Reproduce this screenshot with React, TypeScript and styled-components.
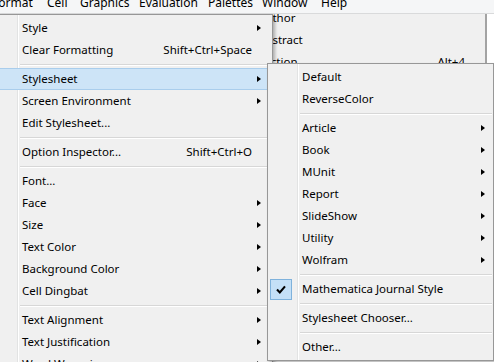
import React from 'react';
import styled, { createGlobalStyle, css } from 'styled-components';

const GlobalStyle = createGlobalStyle`
  html, body {
    margin: 0;
    padding: 0;
    background: #fff;
    overflow: hidden;
  }
  body {
    font-family: 'Noto Sans', 'Open Sans', sans-serif;
    font-size: 11.5px;
    color: #000;
  }
`;

const Screen = styled.div`
  position: relative;
  width: 494px;
  height: 362px;
  overflow: hidden;
  background: #fff;
`;

const MenuBar = styled.div`
  display: flex;
  height: 13px;
  border-bottom: 1px solid #d9dadb;
  background: #f5f6f7;
  overflow: hidden;
  margin-left: -8px;
`;

const MenuTitle = styled.div<{ $w: number }>`
  flex: none;
  width: ${p => p.$w}px;
  line-height: 12px;
  margin-top: -3px;
  font-size: 12px;
  white-space: nowrap;
`;

const Panel = styled.div<{ $left: number; $top: number; $width: number; $gutter: number; $z: number }>`
  position: absolute;
  left: ${p => p.$left}px;
  top: ${p => p.$top}px;
  width: ${p => p.$width}px;
  box-sizing: border-box;
  padding: 2px 0;
  z-index: ${p => p.$z};
  border: 1px solid #979797;
  background:
    linear-gradient(
      to right,
      transparent ${p => p.$gutter}px,
      #e2e3e3 ${p => p.$gutter}px,
      #e2e3e3 ${p => p.$gutter + 1}px,
      #ffffff ${p => p.$gutter + 1}px,
      #ffffff ${p => p.$gutter + 2}px,
      transparent ${p => p.$gutter + 2}px
    ),
    #f0f0f0;
  box-shadow: 2px 2px 3px rgba(0, 0, 0, 0.28);
`;

const BackPanel = styled.div`
  position: absolute;
  left: 150px;
  top: 14px;
  width: 337px;
  height: 80px;
  box-sizing: border-box;
  overflow: hidden;
  background: #f0f0f0;
  border-right: 2px solid #a3a3a3;
  z-index: 1;
`;

const BackList = styled.div`
  margin-top: -7px;
  padding: 0 20px 0 108px;
`;

const Row = styled.div<{ $active?: boolean }>`
  display: flex;
  align-items: center;
  height: 22px;
  box-sizing: border-box;
  white-space: nowrap;
  ${p =>
    p.$active &&
    css`
      background: #cde4f7;
      border-top: 1px solid #a9cdec;
      border-bottom: 1px solid #a9cdec;
    `}
`;

const Gutter = styled.div<{ $w: number }>`
  flex: none;
  width: ${p => p.$w}px;
  height: 20px;
  display: flex;
  align-items: center;
  padding-left: 2px;
  box-sizing: border-box;
`;

const Label = styled.div`
  flex: 1;
  line-height: 20px;
`;

const Shortcut = styled.div`
  flex: none;
  line-height: 20px;
`;

const ArrowCell = styled.div<{ $w: number }>`
  flex: none;
  width: ${p => p.$w}px;
  display: flex;
  align-items: center;
  padding-left: 5px;
  box-sizing: border-box;
`;

const Arrow = styled.div`
  width: 0;
  height: 0;
  border-left: 4px solid #000;
  border-top: 3.5px solid transparent;
  border-bottom: 3.5px solid transparent;
`;

const Separator = styled.div<{ $from: number; $to: number }>`
  height: 7px;
  box-sizing: border-box;
  padding-top: 3px;
  margin: 0 ${p => p.$to}px 0 ${p => p.$from}px;
  &::after {
    content: '';
    display: block;
    border-top: 1px solid #d7d7d7;
    border-bottom: 1px solid #ffffff;
  }
`;

const CheckBox = styled.div`
  width: 22px;
  height: 21px;
  box-sizing: border-box;
  border: 1px solid #7fb2dc;
  background: #c4e0f7;
  display: flex;
  align-items: center;
  justify-content: center;
`;

type Item =
  | { sep: true }
  | { sep?: false; label: string; shortcut?: string; sub?: boolean; active?: boolean; checked?: boolean };

const formatMenu: Item[] = [
  { label: 'Style', sub: true },
  { label: 'Clear Formatting', shortcut: 'Shift+Ctrl+Space' },
  { sep: true },
  { label: 'Stylesheet', sub: true, active: true },
  { label: 'Screen Environment', sub: true },
  { label: 'Edit Stylesheet...' },
  { sep: true },
  { label: 'Option Inspector...', shortcut: 'Shift+Ctrl+O' },
  { sep: true },
  { label: 'Font...' },
  { label: 'Face', sub: true },
  { label: 'Size', sub: true },
  { label: 'Text Color', sub: true },
  { label: 'Background Color', sub: true },
  { label: 'Cell Dingbat', sub: true },
  { sep: true },
  { label: 'Text Alignment', sub: true },
  { label: 'Text Justification', sub: true },
  { label: 'Word Wrapping', sub: true },
];

const stylesheetMenu: Item[] = [
  { label: 'Default' },
  { label: 'ReverseColor' },
  { sep: true },
  { label: 'Article', sub: true },
  { label: 'Book', sub: true },
  { label: 'MUnit', sub: true },
  { label: 'Report', sub: true },
  { label: 'SlideShow', sub: true },
  { label: 'Utility', sub: true },
  { label: 'Wolfram', sub: true },
  { sep: true },
  { label: 'Mathematica Journal Style', checked: true },
  { sep: true },
  { label: 'Stylesheet Chooser...' },
  { sep: true },
  { label: 'Other...' },
];

const titles: [string, number][] = [
  ['Format', 55],
  ['Cell', 33],
  ['Graphics', 59],
  ['Evaluation', 69],
  ['Palettes', 54],
  ['Window', 59],
  ['Help', 40],
];

const Check = () => (
  <svg width="10" height="9" viewBox="0 0 10 9">
    <path d="M1 4.6 L3.8 7.4 L9 1.4" fill="none" stroke="#000" strokeWidth="2.1" />
  </svg>
);

interface MenuProps {
  items: Item[];
  gutter: number;
  arrowCell: number;
  sepFrom: number;
  sepTo: number;
}

const MenuItems: React.FC<MenuProps> = ({ items, gutter, arrowCell, sepFrom, sepTo }) => (
  <>
    {items.map((item, i) =>
      item.sep ? (
        <Separator key={i} $from={sepFrom} $to={sepTo} />
      ) : (
        <Row key={i} $active={item.active}>
          <Gutter $w={gutter}>
            {item.checked && (
              <CheckBox>
                <Check />
              </CheckBox>
            )}
          </Gutter>
          <Label>{item.label}</Label>
          {item.shortcut && <Shortcut>{item.shortcut}</Shortcut>}
          <ArrowCell $w={arrowCell}>{item.sub && <Arrow />}</ArrowCell>
        </Row>
      )
    )}
  </>
);

const App: React.FC = () => (
  <Screen>
    <GlobalStyle />
    <MenuBar>
      {titles.map(([t, w]) => (
        <MenuTitle key={t} $w={w}>
          {t}
        </MenuTitle>
      ))}
    </MenuBar>

    <BackPanel>
      <BackList>
        <Row>
          <Label>Author</Label>
        </Row>
        <Row>
          <Label>Abstract</Label>
        </Row>
        <Row>
          <Label>Section</Label>
          <Shortcut>Alt+4</Shortcut>
        </Row>
      </BackList>
    </BackPanel>

    <Panel $left={-1} $top={14} $width={274} $gutter={17} $z={2}>
      <MenuItems items={formatMenu} gutter={22} arrowCell={20} sepFrom={20} sepTo={2} />
    </Panel>

    <Panel $left={267} $top={63} $width={227} $gutter={29} $z={3}>
      <MenuItems items={stylesheetMenu} gutter={34} arrowCell={17} sepFrom={32} sepTo={1} />
    </Panel>
  </Screen>
);

export default App;
